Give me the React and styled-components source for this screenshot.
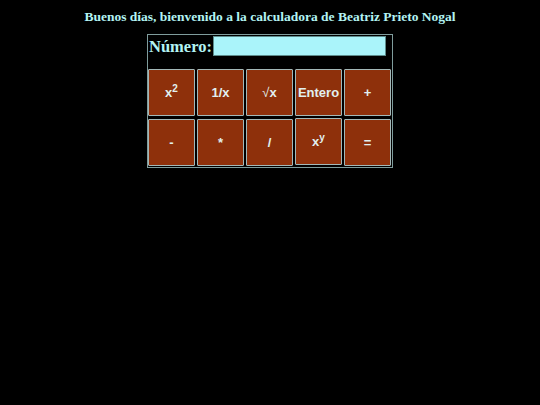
import React from "react";
import styled, { createGlobalStyle } from "styled-components";

const GlobalStyle = createGlobalStyle`
  html, body {
    margin: 0;
    background: #000;
  }
  body {
    font-family: "Liberation Serif", "Times New Roman", serif;
  }
`;

const Page = styled.div`
  display: flex;
  flex-direction: column;
  align-items: center;
  padding-top: 9px;
  min-height: 405px;
  background: #000;
`;

const Title = styled.h1`
  margin: 0 0 9px;
  font-size: 13.5px;
  font-weight: bold;
  color: #b3f3f3;
  line-height: 16px;
`;

const Calc = styled.div`
  display: grid;
  grid-template-columns: repeat(5, 47px);
  column-gap: 2px;
  row-gap: 3px;
  padding: 1px 1px 1px 0;
  border: 1px solid #7f9c9c;
`;

const Header = styled.div`
  grid-column: 1 / -1;
  display: flex;
  align-items: flex-start;
  height: 30px;
  padding-left: 1px;
`;

const Label = styled.label`
  font-size: 16.5px;
  font-weight: bold;
  color: #b3f3f3;
  line-height: 20px;
  padding-top: 1px;
`;

const NumberInput = styled.input`
  width: 173px;
  height: 20px;
  box-sizing: border-box;
  margin: 0 0 0 1px;
  background: #aaf4fa;
  border: 1px solid #5e8c8c;
  padding: 0;
  outline: none;
`;

const Key = styled.button`
  width: 47px;
  height: 47px;
  box-sizing: border-box;
  background: #8e300b;
  border: 1px solid #a3b8b8;
  border-radius: 1px;
  color: #e2f0f0;
  font-family: "Liberation Sans", Arial, sans-serif;
  font-size: 13px;
  font-weight: bold;
  padding: 0;
  cursor: pointer;
  margin-top: ${(p) => (p.$shift ? "-1px" : "0")};

  sup {
    font-size: 10px;
    line-height: 0;
  }
`;

const Root = styled.span`
  font-weight: normal;
`;

const keys = [
  { label: <>x<sup>2</sup></> },
  { label: "1/x" },
  { label: <><Root>√</Root>x</> },
  { label: "Entero" },
  { label: "+" },
  { label: "-" },
  { label: "*" },
  { label: "/" },
  { label: <>x<sup>y</sup></>, shift: true },
  { label: "=" },
];

export default function App() {
  return (
    <>
      <GlobalStyle />
      <Page>
        <Title>Buenos días, bienvenido a la calculadora de Beatriz Prieto Nogal</Title>
        <Calc>
          <Header>
            <Label htmlFor="num">Número:</Label>
            <NumberInput id="num" type="text" />
          </Header>
          {keys.map((k, i) => (
            <Key key={i} $shift={k.shift}>
              {k.label}
            </Key>
          ))}
        </Calc>
      </Page>
    </>
  );
}
